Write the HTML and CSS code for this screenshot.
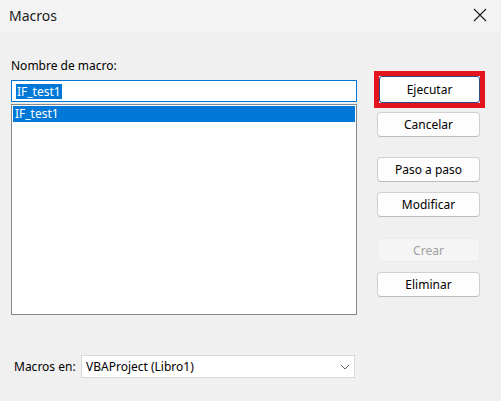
FILE: index.html
```html
<!DOCTYPE html>
<html lang="es">
<head>
<meta charset="utf-8">
<title>Macros</title>
<link rel="stylesheet" href="styles.css">
</head>
<body>
<div class="dialog">
  <div class="titlebar">
    <span class="title">Macros</span>
    <span class="close">
      <svg width="14" height="14" viewBox="0 0 14 14"><path d="M1 1 L13 13 M13 1 L1 13" stroke="#1a1a1a" stroke-width="1.1" fill="none"/></svg>
    </span>
  </div>
  <div class="main">
    <div class="left">
      <div class="label">Nombre de macro:</div>
      <div class="input"><span class="sel">IF_test1</span></div>
      <div class="list"><div class="item selected">IF_test1</div></div>
      <div class="bottom">
        <span class="blabel">Macros en:</span>
        <div class="select">
          <span>VBAProject (Libro1)</span>
          <svg class="chev" width="10" height="6" viewBox="0 0 10 6"><path d="M1 1 L5 5 L9 1" stroke="#606060" stroke-width="1" fill="none"/></svg>
        </div>
      </div>
    </div>
    <div class="right">
      <div class="highlight">
        <button class="btn default">Ejecutar</button>
      </div>
      <button class="btn b-cancel">Cancelar</button>
      <button class="btn b-step">Paso a paso</button>
      <button class="btn b-mod">Modificar</button>
      <button class="btn b-create" disabled>Crear</button>
      <button class="btn b-del">Eliminar</button>
    </div>
  </div>
</div>
</body>
</html>
```
FILE: styles.css
```css
html, body {
  margin: 0;
  padding: 0;
  background: #f0f0f0;
}
body {
  font-family: "Noto Sans", "Open Sans", sans-serif;
  font-size: 12px;
  color: #000;
  width: 501px;
  height: 401px;
  overflow: hidden;
}
.dialog {
  width: 501px;
  height: 401px;
}
.titlebar {
  height: 32px;
  display: flex;
  align-items: center;
  justify-content: space-between;
  background: #f3f3f3;
}
.title {
  font-size: 14px;
  margin-left: 9px;
  margin-top: -2px;
  color: #1a1a1a;
}
.close {
  display: flex;
  margin-right: 14px;
  margin-top: -2px;
}
.main {
  display: flex;
  padding-left: 11px;
}
.left {
  width: 346px;
  display: flex;
  flex-direction: column;
}
.label {
  height: 16px;
  line-height: 16px;
  margin-top: 26px;
  margin-bottom: 6px;
}
.input {
  height: 22px;
  box-sizing: border-box;
  border: 1px solid #0078d7;
  background: #fff;
  display: flex;
  align-items: center;
  padding-left: 4px;
}
.sel {
  background: #0078d7;
  color: #fff;
  line-height: 15px;
  padding: 0 1px;
}
.list {
  margin-top: 2px;
  height: 211px;
  box-sizing: border-box;
  border: 1px solid #828790;
  background: #fff;
  padding: 1px;
}
.item {
  height: 16px;
  line-height: 16px;
  padding-left: 2px;
}
.item.selected {
  background: #0078d7;
  color: #fff;
}
.bottom {
  margin-top: 40px;
  display: flex;
  align-items: center;
}
.blabel {
  margin-left: 3px;
  width: 67px;
}
.select {
  width: 274px;
  height: 23px;
  box-sizing: border-box;
  border: 1px solid #d9d9d9;
  background: #fff;
  display: flex;
  align-items: center;
  justify-content: space-between;
  padding: 0 4px 0 4px;
}
.chev {
  display: block;
}
.right {
  margin-left: 20px;
  padding-top: 39px;
  display: flex;
  flex-direction: column;
  width: 103px;
}
.highlight {
  margin-left: -3px;
  width: 111px;
  height: 37px;
  box-sizing: border-box;
  border: 5px solid #e3141e;
  display: flex;
}
.btn {
  font-family: "Noto Sans", "Open Sans", sans-serif;
  font-size: 12px;
  color: #000;
  background: #fdfdfd;
  border: 1px solid #d0d0d0;
  border-bottom-color: #bcbcbc;
  border-radius: 4px;
  height: 25px;
  width: 103px;
  padding: 0;
  box-sizing: border-box;
}
.btn.default {
  width: 101px;
  height: 27px;
  border: 1px solid #2b4c86;
  border-radius: 3px;
  background: #fff;
}
.b-cancel { margin-top: 4px; }
.b-step { margin-top: 20px; }
.b-mod { margin-top: 10px; }
.b-create {
  margin-top: 21px;
  height: 24px;
  background: #f5f5f5;
  color: #a0a0a0;
  border-color: #ececec;
}
.b-del { margin-top: 10px; }
```
